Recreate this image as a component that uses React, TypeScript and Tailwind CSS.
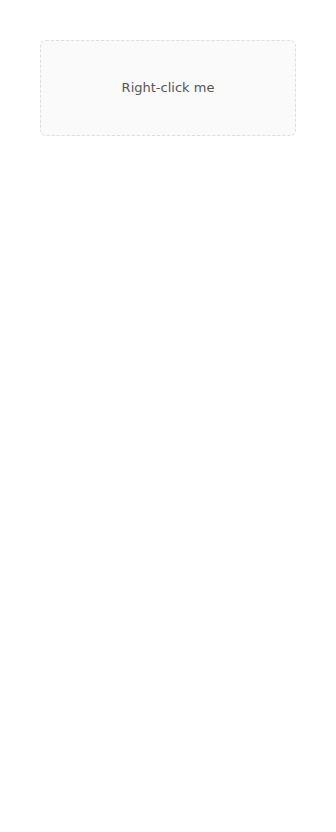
export default function App() {
  return (
    <div className="p-10" style={{ fontFamily: '"DejaVu Sans", sans-serif' }}>
      <div className="w-64 h-24 flex items-center justify-center rounded-md border border-dashed border-[#dddddd] bg-[#fafafa] text-[13px] text-[#555555]">
        Right-click me
      </div>
    </div>
  );
}
